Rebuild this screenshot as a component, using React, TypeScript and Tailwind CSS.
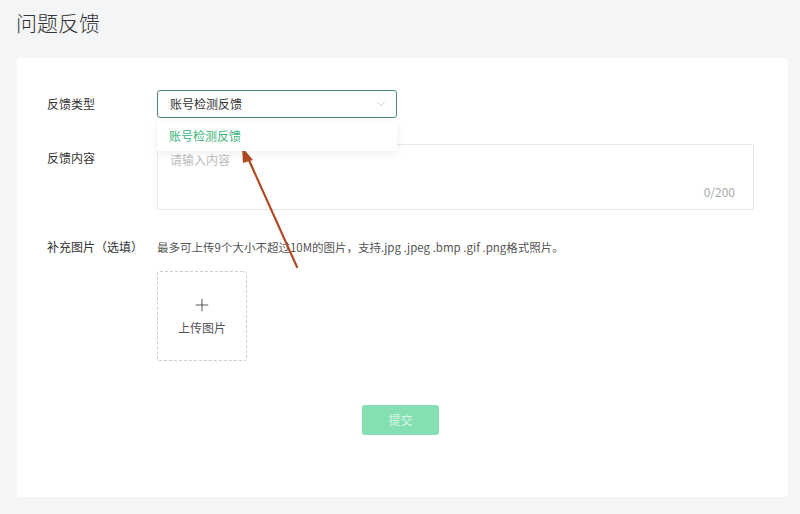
import React from 'react';
import { ChevronDown, Plus } from 'lucide-react';

const font = "font-['Noto_Sans_CJK_SC','Noto_Sans',sans-serif]";

function FormRow({ label, children, className = '' }: { label: string; children: React.ReactNode; className?: string }) {
  return (
    <div className={`flex ${className}`}>
      <div className="w-[110px] shrink-0 text-[12px] text-[#333] leading-[28px]">{label}</div>
      <div className="flex-1">{children}</div>
    </div>
  );
}

export default function App() {
  return (
    <div className={`relative w-[800px] h-[514px] bg-[#f4f5f7] ${font} overflow-hidden`}>
      <h1 className="pl-4 pt-[7px] h-[58px] text-[21px] leading-[30px] text-[#333] font-light">问题反馈</h1>

      <div className="mx-[17px] mr-[12px] h-[439px] bg-white rounded-[4px] pl-[30px] pt-[32px] pr-[34px]">
        <FormRow label="反馈类型">
          <div className="relative w-[240px]">
            <div className="h-[28px] border border-[#4b8b70] rounded-[3px] flex items-center justify-between pl-[12px] pr-[8px] text-[12px] text-[#333]">
              <span>账号检测反馈</span>
              <ChevronDown className="w-3.5 h-3.5 text-[#bbb]" strokeWidth={1.2} />
            </div>
            <div className="absolute left-0 top-[31px] w-[240px] h-[30px] bg-white shadow-[0_2px_8px_rgba(0,0,0,0.08)] z-10 flex items-center pl-[12px] text-[12px] text-[#3cb47a]">
              账号检测反馈
            </div>
          </div>
        </FormRow>

        <FormRow label="反馈内容" className="mt-[26px]">
          <div className="h-[66px] border border-[#e6e6e6] rounded-[2px] relative">
            <div className="pl-[12px] pt-[6px] text-[12px] text-[#bbb]">请输入内容</div>
            <div className="absolute right-[18px] bottom-[8px] text-[12px] text-[#aaa]">0/200</div>
          </div>
        </FormRow>

        <FormRow label="补充图片（选填）" className="mt-[23px]">
          <div className="text-[11.5px] text-[#555] leading-[28px]">最多可上传9个大小不超过10M的图片，支持.jpg .jpeg .bmp .gif .png格式照片。</div>
          <div className="mt-[10px] w-[90px] h-[90px] border border-dashed border-[#ccc] rounded-[3px] flex flex-col items-center justify-center">
            <Plus className="w-5 h-5 text-[#555]" strokeWidth={1.2} />
            <div className="mt-[4px] text-[12px] text-[#555]">上传图片</div>
          </div>
        </FormRow>

        <div className="flex justify-center mt-[44px]">
          <button className="w-[77px] h-[30px] rounded-[3px] bg-[#84e0b1] text-[12px] text-[#d8f5e6]">提交</button>
        </div>
      </div>

      <svg className="absolute left-0 top-0 pointer-events-none" width="800" height="514">
        <line x1="297" y1="267" x2="248" y2="158" stroke="#b04a22" strokeWidth="2.2" strokeLinecap="round" />
        <polygon points="242,147 253,160 243,163" fill="#b04a22" />
      </svg>
    </div>
  );
}
